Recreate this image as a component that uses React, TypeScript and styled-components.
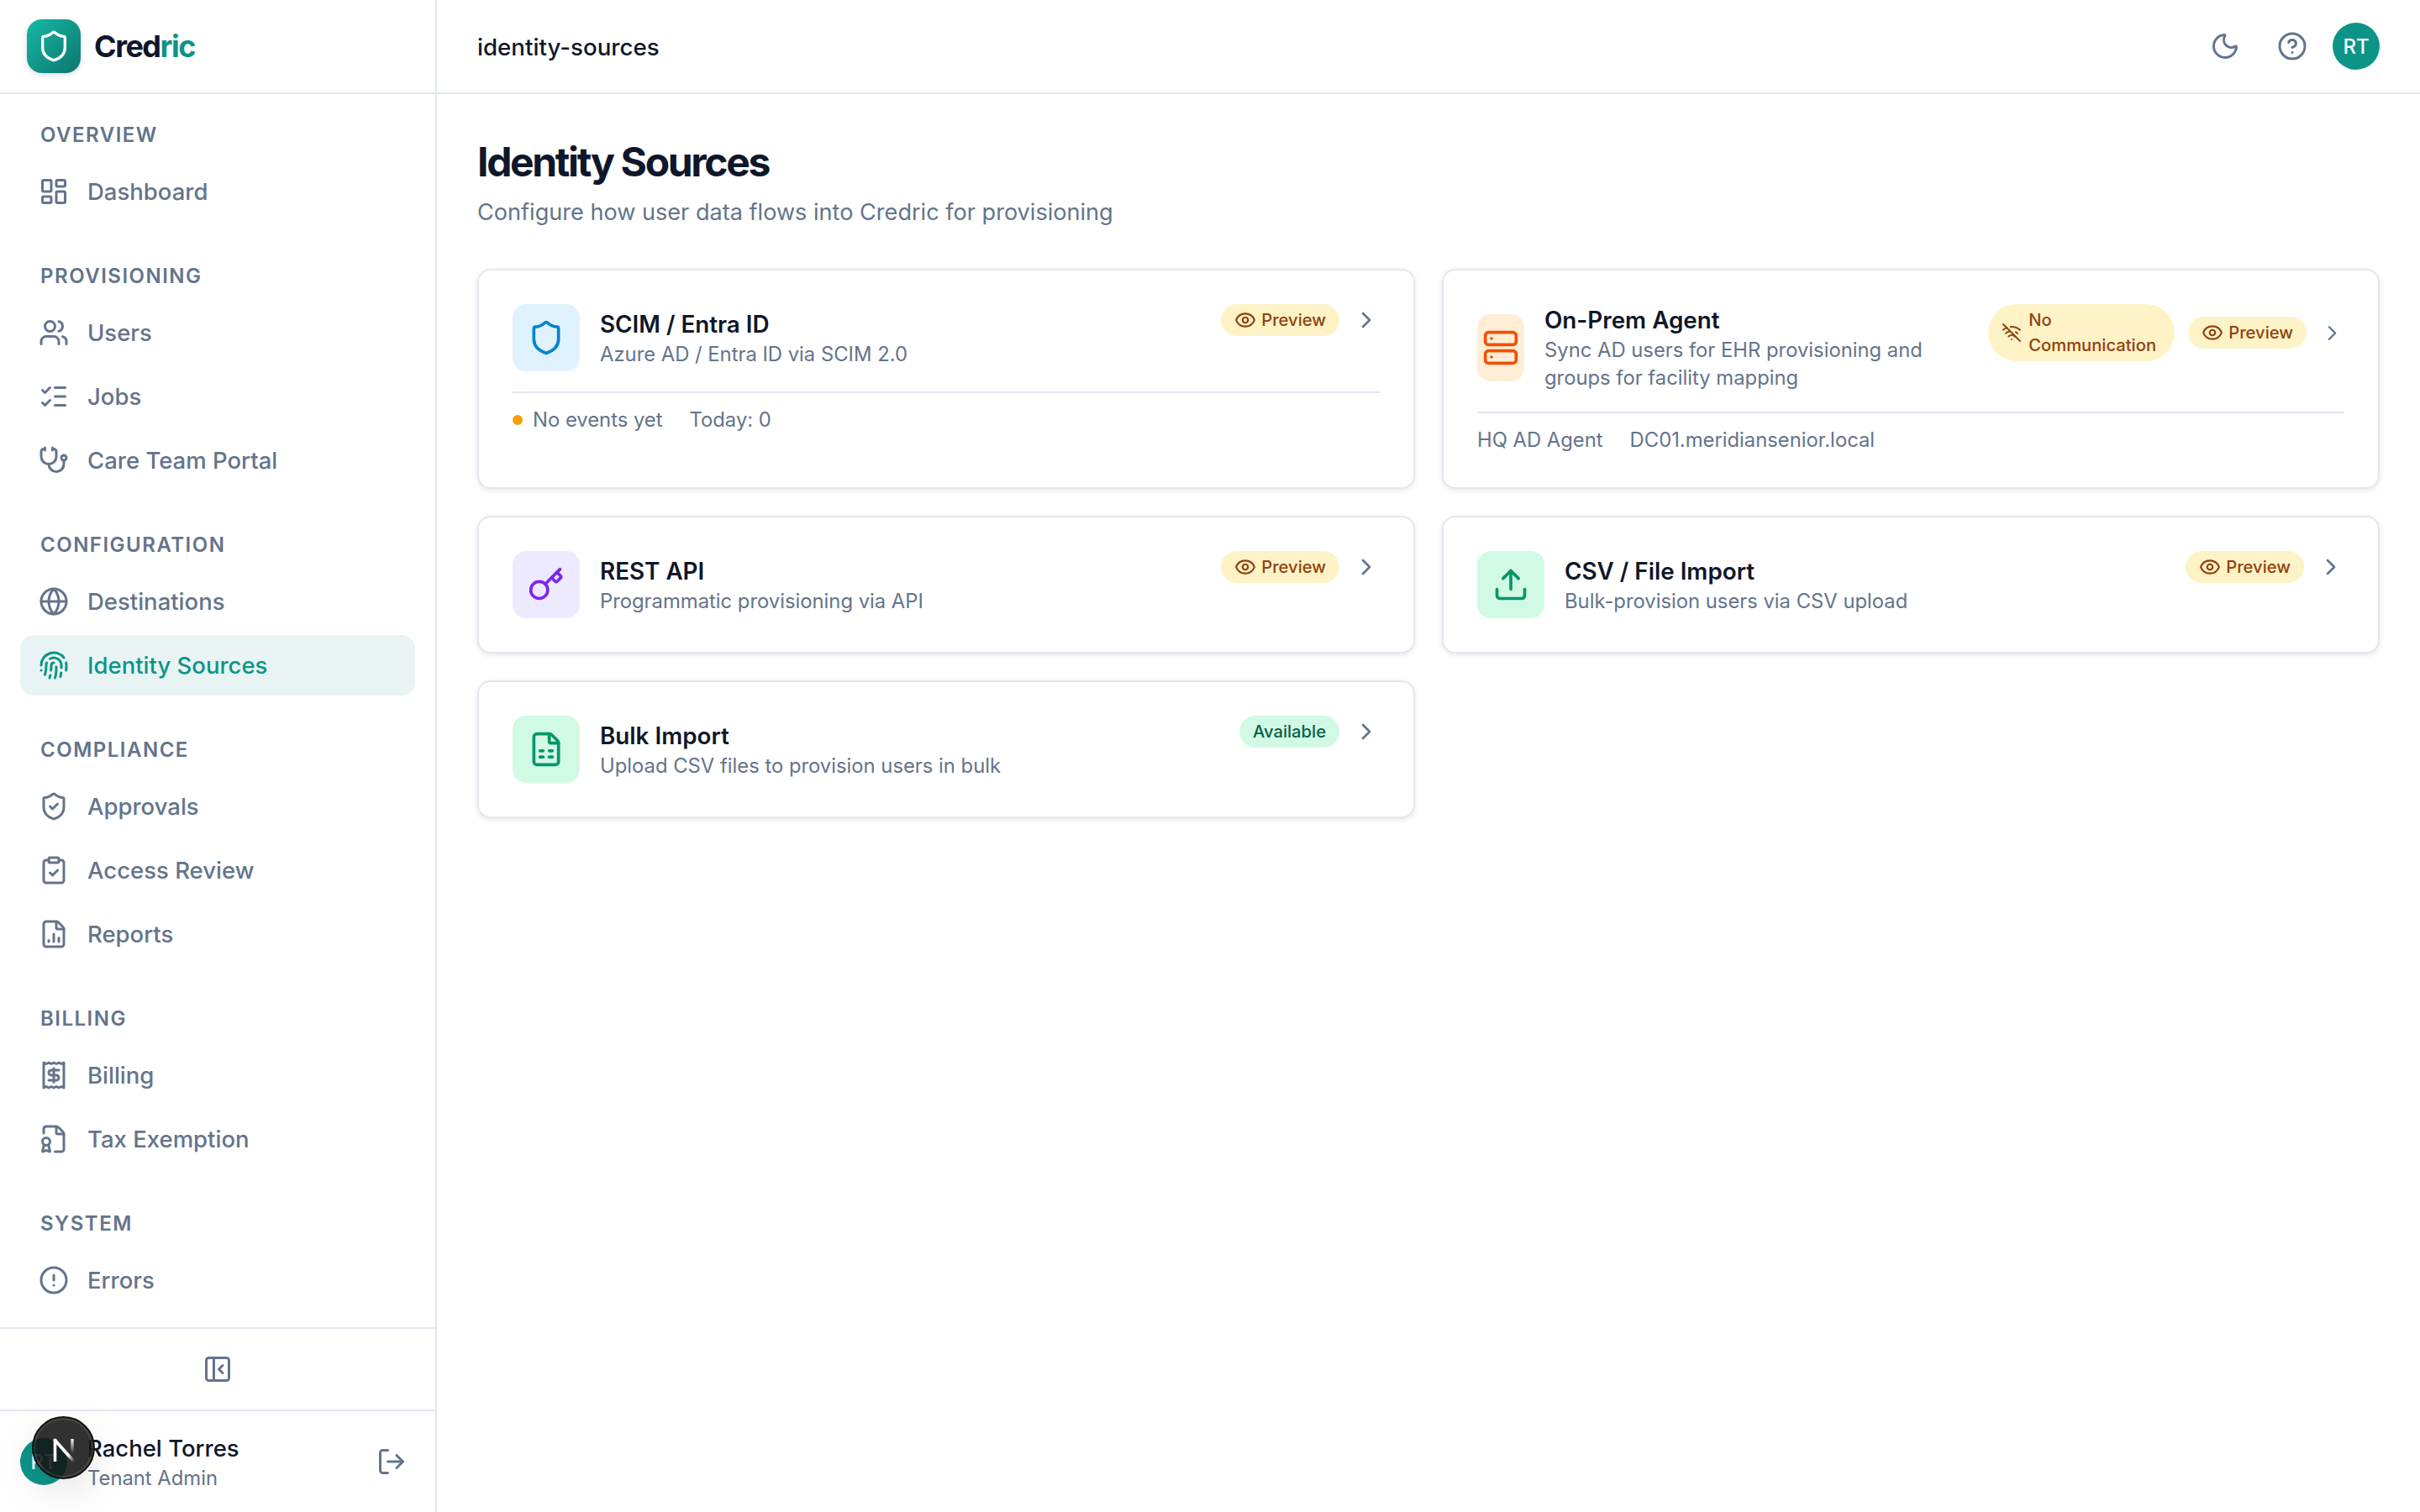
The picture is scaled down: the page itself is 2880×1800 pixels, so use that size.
import React from 'react';
import styled, { createGlobalStyle } from 'styled-components';
import {
  ChevronRight,
  CircleAlert,
  CircleHelp,
  ClipboardCheck,
  Eye,
  FileBadge,
  FileChartColumn,
  FileSpreadsheet,
  Fingerprint,
  Globe,
  Key,
  LayoutDashboard,
  ListChecks,
  LogOut,
  Moon,
  PanelLeftClose,
  Receipt,
  Server,
  Shield,
  ShieldCheck,
  Stethoscope,
  Upload,
  Users,
  WifiOff,
} from 'lucide-react';

const GlobalStyle = createGlobalStyle`
  html, body {
    margin: 0;
    padding: 0;
    background: #fff;
    font-family: Inter, "Liberation Sans", sans-serif;
    color: #0f172a;
  }
  * { box-sizing: border-box; }
`;

const Layout = styled.div`
  display: flex;
  width: 2880px;
  height: 1800px;
  overflow: hidden;
  position: relative;
`;

const Sidebar = styled.aside`
  width: 520px;
  flex-shrink: 0;
  display: flex;
  flex-direction: column;
  border-right: 2px solid #e2e8f0;
`;

const Brand = styled.div`
  height: 112px;
  flex-shrink: 0;
  display: flex;
  align-items: center;
  gap: 16px;
  padding: 0 32px;
  border-bottom: 2px solid #e2e8f0;
`;

const LogoMark = styled.div`
  width: 64px;
  height: 64px;
  border-radius: 18px;
  display: flex;
  align-items: center;
  justify-content: center;
  color: #fff;
  background: linear-gradient(135deg, #14b8a6, #0f766e);
  box-shadow: 0 2px 6px rgba(15, 23, 42, 0.16);
`;

const BrandName = styled.div`
  font-size: 36px;
  font-weight: 700;
  letter-spacing: -1.5px;
  color: #0f172a;

  span {
    color: #0d9488;
  }
`;

const Nav = styled.nav`
  flex: 1;
  padding: 32px 24px 0;
  display: flex;
  flex-direction: column;
  gap: 48px;
`;

const Section = styled.div`
  display: flex;
  flex-direction: column;
  gap: 4px;
`;

const SectionLabel = styled.div`
  height: 32px;
  margin-bottom: 12px;
  padding-left: 24px;
  display: flex;
  align-items: center;
  font-size: 24px;
  font-weight: 600;
  letter-spacing: 1.5px;
  text-transform: uppercase;
  color: #64748b;
`;

const NavItem = styled.a<{ $active?: boolean }>`
  height: 72px;
  display: flex;
  align-items: center;
  gap: 22px;
  padding-left: 22px;
  border-radius: 16px;
  font-size: 27.5px;
  font-weight: 500;
  color: ${(p) => (p.$active ? '#0d9488' : '#64748b')};
  background: ${(p) => (p.$active ? '#e7f4f3' : 'transparent')};
`;

const CollapseRow = styled.div`
  height: 98px;
  flex-shrink: 0;
  display: flex;
  align-items: center;
  justify-content: center;
  border-top: 2px solid #e2e8f0;
  color: #64748b;
`;

const UserRow = styled.div`
  height: 122px;
  flex-shrink: 0;
  display: flex;
  align-items: center;
  gap: 24px;
  padding: 0 34px 0 24px;
  border-top: 2px solid #e2e8f0;
  color: #64748b;
`;

const Avatar = styled.div`
  width: 56px;
  height: 56px;
  flex-shrink: 0;
  border-radius: 50%;
  display: flex;
  align-items: center;
  justify-content: center;
  background: #0d9488;
  color: #fff;
  font-size: 24px;
  font-weight: 500;
`;

const UserInfo = styled.div`
  flex: 1;
  min-width: 0;
`;

const UserName = styled.div`
  font-size: 27.5px;
  line-height: 40px;
  font-weight: 500;
  color: #0f172a;
`;

const UserRole = styled.div`
  font-size: 23.8px;
  line-height: 32px;
  color: #64748b;
`;

const DevBadge = styled.div`
  position: absolute;
  left: 38px;
  top: 1686px;
  width: 75px;
  height: 75px;
  border-radius: 50%;
  display: flex;
  align-items: center;
  justify-content: center;
  background: rgba(18, 18, 18, 0.87);
  border: 2px solid #111;
  box-shadow: inset 0 0 0 2px rgba(255, 255, 255, 0.12), 0 16px 48px rgba(0, 0, 0, 0.1);
`;

const Main = styled.main`
  flex: 1;
  min-width: 0;
  display: flex;
  flex-direction: column;
`;

const TopBar = styled.header`
  height: 112px;
  flex-shrink: 0;
  display: flex;
  align-items: center;
  padding: 0 48px;
  border-bottom: 2px solid #e2e8f0;
  color: #64748b;
`;

const Crumb = styled.div`
  flex: 1;
  padding-top: 1px;
  font-size: 27.7px;
  font-weight: 500;
  color: #0f172a;
`;

const TopActions = styled.div`
  display: flex;
  align-items: center;
  gap: 44px;

  ${Avatar} {
    margin-left: -14px;
  }
`;

const Content = styled.div`
  padding: 49px 48px 0;
`;

const Title = styled.h1`
  margin: 0;
  font-size: 48px;
  line-height: 64px;
  font-weight: 700;
  letter-spacing: -2.35px;
  color: #0f172a;
`;

const Subtitle = styled.p`
  margin: 8px 0 0;
  font-size: 27.1px;
  line-height: 40px;
  color: #64748b;
`;

const CardGrid = styled.div`
  margin-top: 47px;
  display: grid;
  grid-template-columns: 1fr 1fr;
  gap: 32px;
  align-items: stretch;
`;

const Card = styled.div`
  background: #fff;
  border: 2px solid #e2e8f0;
  border-radius: 16px;
  padding: 40px;
  box-shadow: 0 2px 6px rgba(15, 23, 42, 0.1);
`;

const CardHead = styled.div`
  display: flex;
  align-items: center;
  gap: 24px;
`;

const IconBox = styled.div<{ $bg: string; $fg: string; $width?: number }>`
  width: ${(p) => p.$width ?? 80}px;
  height: 80px;
  flex-shrink: 0;
  border-radius: 16px;
  display: flex;
  align-items: center;
  justify-content: center;
  background: ${(p) => p.$bg};
  color: ${(p) => p.$fg};
`;

const CardText = styled.div`
  flex: 1;
  min-width: 0;
`;

const CardTitle = styled.div`
  font-size: 27.8px;
  line-height: 38px;
  font-weight: 600;
  color: #0f172a;
`;

const CardDesc = styled.div`
  font-size: 23.8px;
  line-height: 33px;
  color: #64748b;
`;

const CardSide = styled.div`
  align-self: flex-start;
  display: flex;
  align-items: center;
  gap: 16px;
  color: #64748b;
`;

const Pill = styled.span<{ $tone: 'warn' | 'ok'; $width?: number }>`
  display: inline-flex;
  align-items: center;
  gap: 6px;
  flex-shrink: 0;
  width: ${(p) => (p.$width ? `${p.$width}px` : 'auto')};
  padding: 4px 16px;
  border-radius: 34px;
  font-size: 20.2px;
  line-height: 30px;
  font-weight: 500;
  background: ${(p) => (p.$tone === 'warn' ? '#fef3c7' : '#d1fae5')};
  color: ${(p) => (p.$tone === 'warn' ? '#92400e' : '#065f46')};

  svg {
    flex-shrink: 0;
  }
`;

const SignalPill = styled(Pill)`
  gap: 8px;
`;

const CardFoot = styled.div`
  margin-top: 24px;
  padding-top: 16px;
  border-top: 2px solid #e2e8f0;
  display: flex;
  align-items: center;
  gap: 32px;
  font-size: 23.8px;
  line-height: 32px;
  color: #64748b;
`;

const FootStatus = styled.span`
  display: flex;
  align-items: center;
  gap: 12px;
`;

const StatusDot = styled.span`
  width: 12px;
  height: 12px;
  border-radius: 50%;
  background: #f59e0b;
`;

const navSections = [
  { label: 'Overview', items: [{ name: 'Dashboard', icon: LayoutDashboard }] },
  {
    label: 'Provisioning',
    items: [
      { name: 'Users', icon: Users },
      { name: 'Jobs', icon: ListChecks },
      { name: 'Care Team Portal', icon: Stethoscope },
    ],
  },
  {
    label: 'Configuration',
    items: [
      { name: 'Destinations', icon: Globe },
      { name: 'Identity Sources', icon: Fingerprint, active: true },
    ],
  },
  {
    label: 'Compliance',
    items: [
      { name: 'Approvals', icon: ShieldCheck },
      { name: 'Access Review', icon: ClipboardCheck },
      { name: 'Reports', icon: FileChartColumn },
    ],
  },
  {
    label: 'Billing',
    items: [
      { name: 'Billing', icon: Receipt },
      { name: 'Tax Exemption', icon: FileBadge },
    ],
  },
  { label: 'System', items: [{ name: 'Errors', icon: CircleAlert }] },
];

const PreviewPill = () => (
  <Pill $tone="warn">
    <Eye size={26} />
    Preview
  </Pill>
);

function App() {
  return (
    <Layout>
      <GlobalStyle />
      <Sidebar>
        <Brand>
          <LogoMark>
            <Shield size={40} />
          </LogoMark>
          <BrandName>
            Cred<span>ric</span>
          </BrandName>
        </Brand>
        <Nav>
          {navSections.map((section) => (
            <Section key={section.label}>
              <SectionLabel>{section.label}</SectionLabel>
              {section.items.map((item: any) => (
                <NavItem key={item.name} $active={item.active}>
                  <item.icon size={36} />
                  {item.name}
                </NavItem>
              ))}
            </Section>
          ))}
        </Nav>
        <CollapseRow>
          <PanelLeftClose size={36} />
        </CollapseRow>
        <UserRow>
          <Avatar>RT</Avatar>
          <UserInfo>
            <UserName>Rachel Torres</UserName>
            <UserRole>Tenant Admin</UserRole>
          </UserInfo>
          <LogOut size={36} />
        </UserRow>
      </Sidebar>
      <Main>
        <TopBar>
          <Crumb>identity-sources</Crumb>
          <TopActions>
            <Moon size={36} />
            <CircleHelp size={36} />
            <Avatar>RT</Avatar>
          </TopActions>
        </TopBar>
        <Content>
          <Title>Identity Sources</Title>
          <Subtitle>Configure how user data flows into Credric for provisioning</Subtitle>
          <CardGrid>
            <Card>
              <CardHead>
                <IconBox $bg="#e0f2fe" $fg="#0284d0">
                  <Shield size={44} />
                </IconBox>
                <CardText>
                  <CardTitle>SCIM / Entra ID</CardTitle>
                  <CardDesc>Azure AD / Entra ID via SCIM 2.0</CardDesc>
                </CardText>
                <CardSide>
                  <PreviewPill />
                  <ChevronRight size={32} />
                </CardSide>
              </CardHead>
              <CardFoot>
                <FootStatus>
                  <StatusDot />
                  No events yet
                </FootStatus>
                <span>Today: 0</span>
              </CardFoot>
            </Card>
            <Card>
              <CardHead>
                <IconBox $bg="#ffedd5" $fg="#f05008" $width={56}>
                  <Server size={44} />
                </IconBox>
                <CardText>
                  <CardTitle>On-Prem Agent</CardTitle>
                  <CardDesc>Sync AD users for EHR provisioning and groups for facility mapping</CardDesc>
                </CardText>
                <CardSide>
                  <SignalPill $tone="warn" $width={222}>
                    <WifiOff size={24} />
                    No Communication
                  </SignalPill>
                  <PreviewPill />
                  <ChevronRight size={29} />
                </CardSide>
              </CardHead>
              <CardFoot>
                <span>HQ AD Agent</span>
                <span>DC01.meridiansenior.local</span>
              </CardFoot>
            </Card>
            <Card>
              <CardHead>
                <IconBox $bg="#ede9fe" $fg="#7c26f0">
                  <Key size={44} />
                </IconBox>
                <CardText>
                  <CardTitle>REST API</CardTitle>
                  <CardDesc>Programmatic provisioning via API</CardDesc>
                </CardText>
                <CardSide>
                  <PreviewPill />
                  <ChevronRight size={32} />
                </CardSide>
              </CardHead>
            </Card>
            <Card>
              <CardHead>
                <IconBox $bg="#d1fae5" $fg="#059669">
                  <Upload size={44} />
                </IconBox>
                <CardText>
                  <CardTitle>CSV / File Import</CardTitle>
                  <CardDesc>Bulk-provision users via CSV upload</CardDesc>
                </CardText>
                <CardSide>
                  <PreviewPill />
                  <ChevronRight size={32} />
                </CardSide>
              </CardHead>
            </Card>
            <Card>
              <CardHead>
                <IconBox $bg="#d1fae5" $fg="#059669">
                  <FileSpreadsheet size={44} />
                </IconBox>
                <CardText>
                  <CardTitle>Bulk Import</CardTitle>
                  <CardDesc>Upload CSV files to provision users in bulk</CardDesc>
                </CardText>
                <CardSide>
                  <Pill $tone="ok">Available</Pill>
                  <ChevronRight size={32} />
                </CardSide>
              </CardHead>
            </Card>
          </CardGrid>
        </Content>
      </Main>
      <DevBadge>
        <svg width="36" height="36" viewBox="0 0 36 36" fill="none">
          <defs>
            <linearGradient id="nextDiagonal" gradientUnits="userSpaceOnUse" x1="14" y1="14" x2="30" y2="34">
              <stop offset="0" stopColor="#fff" />
              <stop offset="0.6" stopColor="#fff" />
              <stop offset="1" stopColor="#fff" stopOpacity="0" />
            </linearGradient>
            <linearGradient id="nextStem" gradientUnits="userSpaceOnUse" x1="28" y1="7" x2="28" y2="24">
              <stop offset="0" stopColor="#fff" />
              <stop offset="1" stopColor="#fff" stopOpacity="0" />
            </linearGradient>
          </defs>
          <path d="M7.5 34V7" stroke="#fff" strokeWidth="3.6" />
          <path d="M6.5 7.5L30 34" stroke="url(#nextDiagonal)" strokeWidth="3.8" />
          <path d="M28 7V24" stroke="url(#nextStem)" strokeWidth="3.4" />
        </svg>
      </DevBadge>
    </Layout>
  );
}

export default App;
